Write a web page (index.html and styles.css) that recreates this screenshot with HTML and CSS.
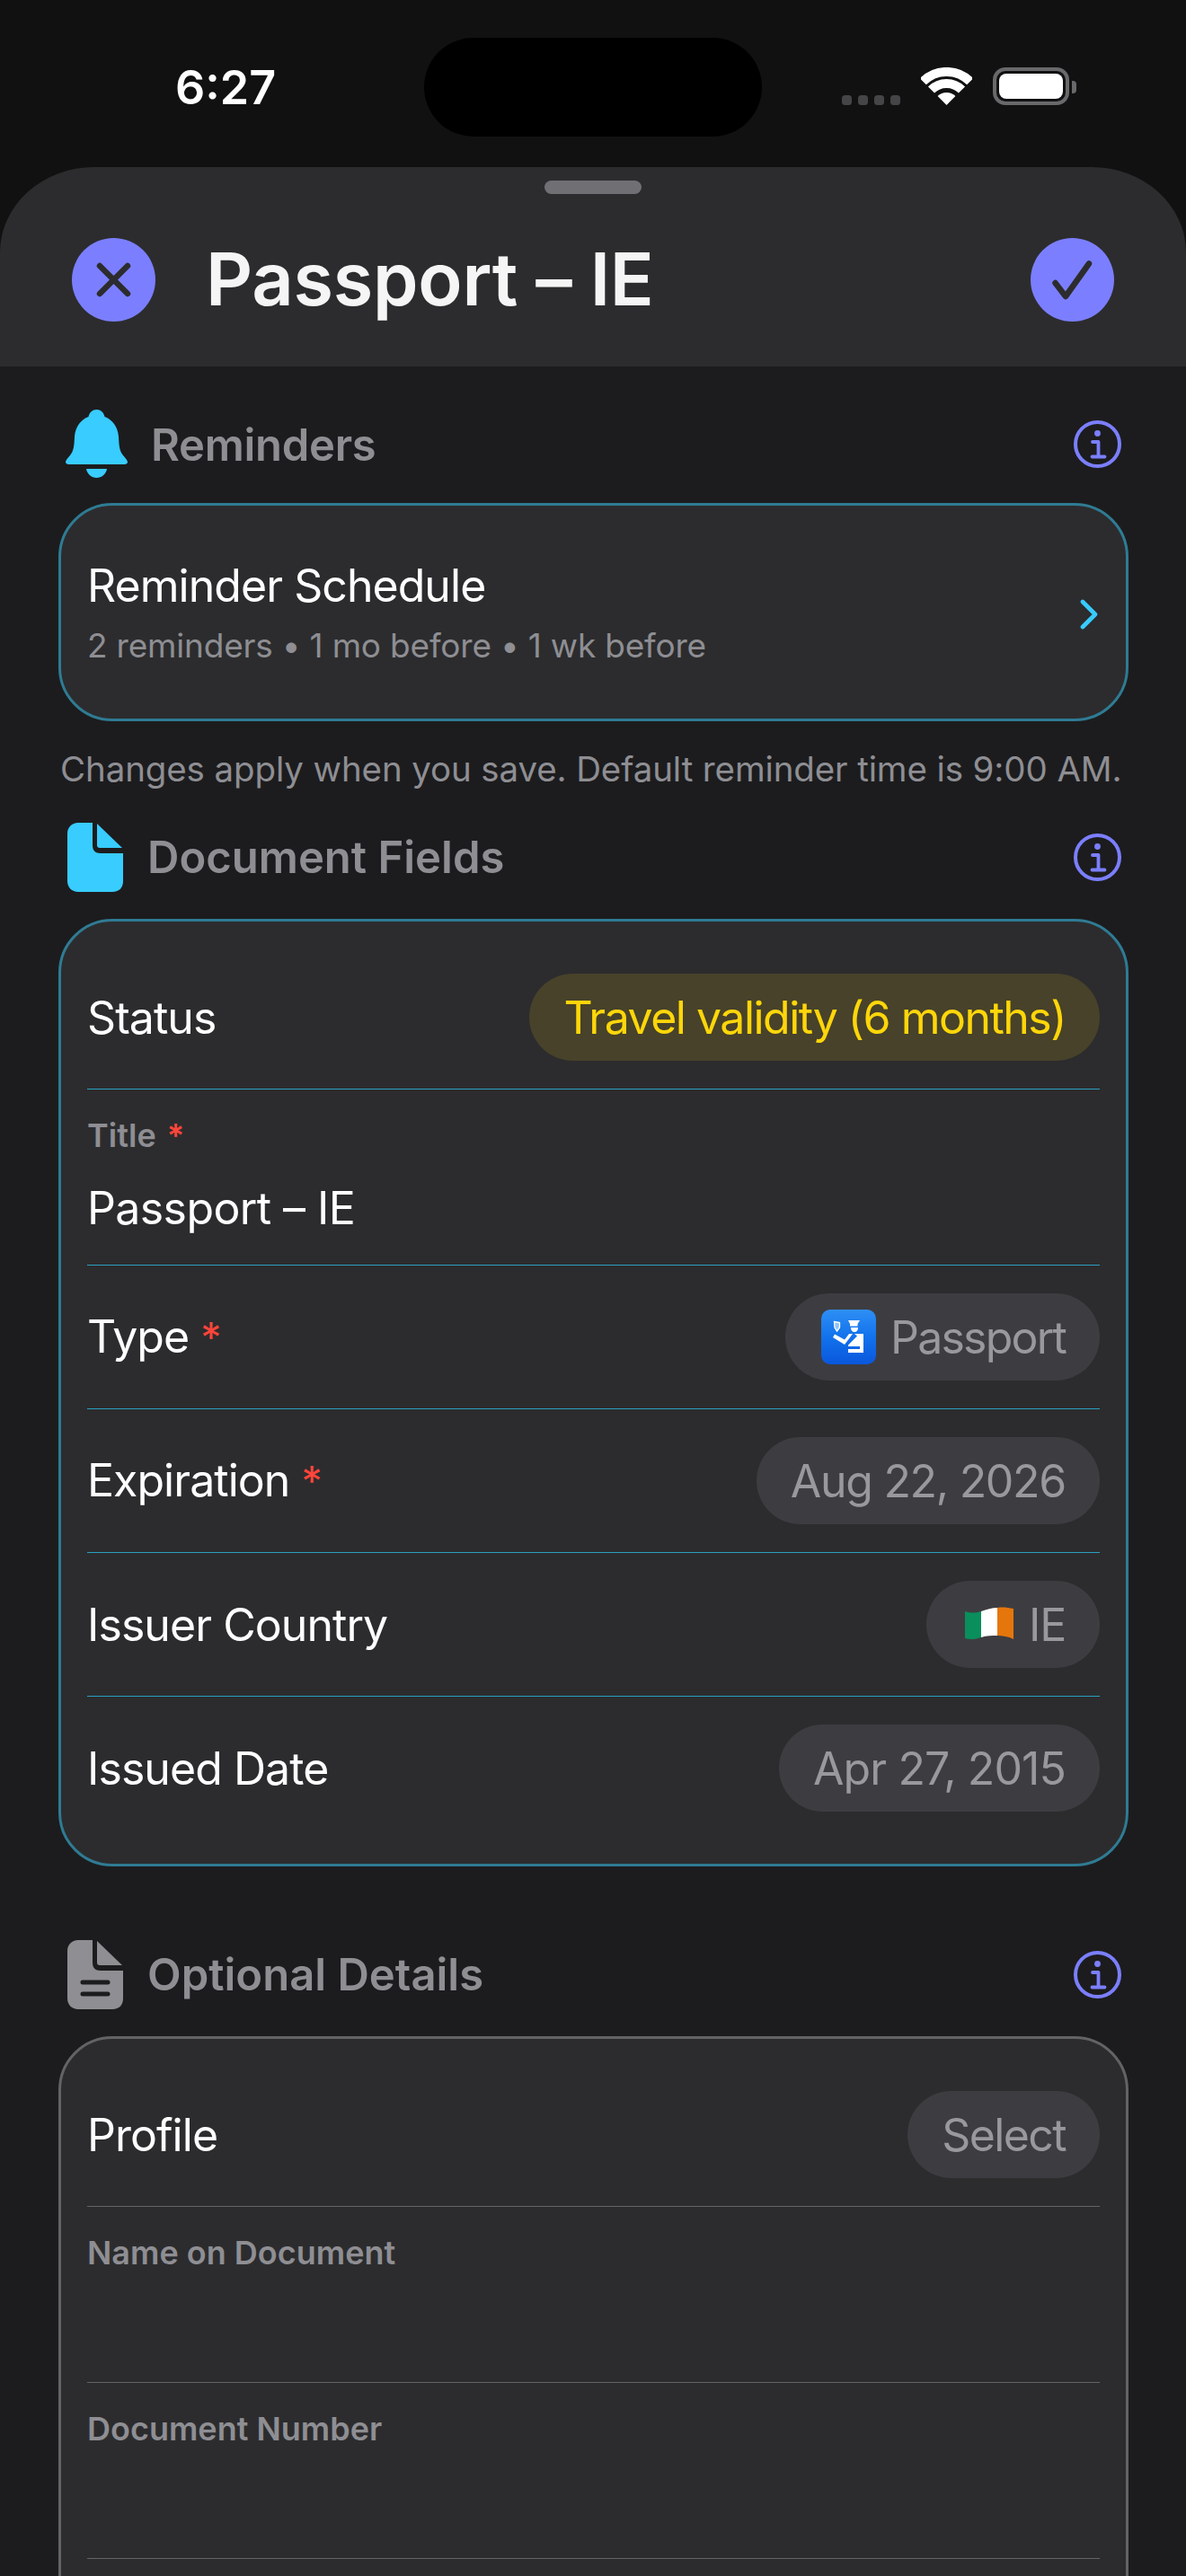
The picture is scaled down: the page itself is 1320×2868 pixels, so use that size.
FILE: index.html
```html
<!DOCTYPE html>
<html lang="en">
<head>
<meta charset="utf-8">
<title>Passport – IE</title>
<link rel="stylesheet" href="styles.css">
</head>
<body>
<div class="screen">
  <div class="top">
    <div class="statusbar">
      <div class="time">6:27</div>
      <div class="island"></div>
      <div class="status-icons">
        <div class="signal"><i></i><i></i><i></i><i></i></div>
        <svg class="wifi" viewBox="0 0 57 42"><path d="M2.3 15.8A37 37 0 0 1 54.7 15.8" fill="none" stroke="#fff" stroke-width="10"/><path d="M11.5 25A24 24 0 0 1 45.5 25" fill="none" stroke="#fff" stroke-width="10"/><path d="M28.5 42L18.6 32.1A14 14 0 0 1 38.4 32.1Z" fill="#fff"/></svg>
        <div class="battery"><div class="battery-fill"></div></div>
        <div class="battery-nub"></div>
      </div>
    </div>
    <header class="sheet-head">
      <div class="grabber"></div>
      <div class="head-row">
        <div class="round-btn"><svg viewBox="0 0 39 39" class="btn-icon"><path d="M4 4L35 35M35 4L4 35" fill="none" stroke="#2c2c2e" stroke-width="6.5" stroke-linecap="round"/></svg></div>
        <h1 class="sheet-title">Passport – IE</h1>
        <div class="round-btn"><svg viewBox="0 0 45 44" class="btn-icon check"><path d="M3.5 25L15 40L41 3.5" fill="none" stroke="#2c2c2e" stroke-width="6.5" stroke-linecap="round" stroke-linejoin="round"/></svg></div>
      </div>
    </header>
  </div>
  <main class="content">
    <div class="section-head head-first">
      <svg class="icon-bell" viewBox="0 0 69 76"><path fill="#38ccff" d="M34.5 0C39 0 42.5 3 43.5 8C52 11 58 19 59 30C59.5 41 60 46 64 51C67 54.5 69 57 69 58.5C69 60 67.5 61 65.5 61H3.5C1.5 61 0 60 0 58.5C0 57 2 54.5 5 51C9 46 9.5 41 10 30C11 19 17 11 25.5 8C26.5 3 30 0 34.5 0Z"/><path fill="#38ccff" d="M23 66H46C45 72 40 76 34.5 76C29 76 24 72 23 66Z"/></svg>
      <h2 class="section-title">Reminders</h2>
      <svg class="icon-info" viewBox="0 0 53 53"><circle cx="26.5" cy="26.5" r="24.5" fill="none" stroke="#7b7fff" stroke-width="4"/><circle cx="26.5" cy="14.5" r="3.4" fill="#7b7fff"/><path d="M21 24H27.5V40M20.5 40.5H34.5" fill="none" stroke="#7b7fff" stroke-width="3.8" stroke-linecap="round" stroke-linejoin="round"/></svg>
    </div>
    <section class="card card-teal schedule">
      <div class="schedule-text">
        <div class="row-label">Reminder Schedule</div>
        <div class="schedule-sub">2 reminders • 1 mo before • 1 wk before</div>
      </div>
      <svg class="chevron" viewBox="0 0 20 34"><path d="M3 3L17 17L3 31" fill="none" stroke="#38ccff" stroke-width="4.6" stroke-linecap="round" stroke-linejoin="round"/></svg>
    </section>
    <p class="caption">Changes apply when you save. Default reminder time is 9:00 AM.</p>

    <div class="section-head">
      <svg class="icon-doc" viewBox="0 0 62 77"><path fill="#38ccff" d="M12 0H28V25C28 31 31 34 37 34H62V65C62 72 58 77 50 77H12C5 77 0 72 0 65V12C0 5 5 0 12 0Z"/><path fill="#38ccff" d="M33 1L61 28H36C34 28 33 27 33 25Z"/></svg>
      <h2 class="section-title">Document Fields</h2>
      <svg class="icon-info" viewBox="0 0 53 53"><circle cx="26.5" cy="26.5" r="24.5" fill="none" stroke="#7b7fff" stroke-width="4"/><circle cx="26.5" cy="14.5" r="3.4" fill="#7b7fff"/><path d="M21 24H27.5V40M20.5 40.5H34.5" fill="none" stroke="#7b7fff" stroke-width="3.8" stroke-linecap="round" stroke-linejoin="round"/></svg>
    </div>
    <section class="card card-teal form">
      <div class="row"><span class="row-label">Status</span><span class="pill pill-warn">Travel validity (6 months)</span></div>
      <div class="field"><div class="field-label">Title <span class="req">*</span></div><div class="field-value">Passport – IE</div></div>
      <div class="row"><span class="row-label">Type <span class="req">*</span></span><span class="pill pill-type">
        <svg class="emoji-passport" viewBox="0 0 61 61"><defs><linearGradient id="blue" x1="0" y1="0" x2="0" y2="1"><stop offset="0" stop-color="#2f8ff5"/><stop offset="0.5" stop-color="#1272ec"/><stop offset="1" stop-color="#0a57dc"/></linearGradient></defs><rect width="61" height="61" rx="10" fill="url(#blue)"/><path fill="#8fc4fb" stroke="#fff" stroke-width="1.3" d="M14.5 13.5L20.5 14.5V20L17.5 24L15 20Z"/><path fill="#fff" d="M30 12H43L40.5 16V18.5H32V16Z"/><path fill="#fff" d="M33 20H41C41 23.5 39.5 25 37 25C34.5 25 33 23.5 33 20Z"/><path fill="#fff" d="M15 27.5L26 33.5L31 27H35L26 39L13 31Z"/><path fill="#fff" d="M37 27H47V48H30V44H43V41H30V39.500L40 29.500Z"/></svg>
        Passport</span></div>
      <div class="row"><span class="row-label">Expiration <span class="req">*</span></span><span class="pill">Aug 22, 2026</span></div>
      <div class="row"><span class="row-label">Issuer Country</span><span class="pill pill-flag">
        <svg class="emoji-flag" viewBox="0 0 54 39"><path fill="#0a8f5c" d="M0 5C6 7 12 7 18 5V34C12 36 6 37 0 35Z"/><path fill="#fff" d="M18 5C24 3 30 1 36 1V32C30 32 24 32 18 34Z"/><path fill="#e5760c" d="M36 1C42 0 48 1 54 2V36C48 33 42 32 36 32Z"/></svg>
        IE</span></div>
      <div class="row"><span class="row-label">Issued Date</span><span class="pill pill-date">Apr 27, 2015</span></div>
    </section>

    <div class="section-head head-spaced">
      <svg class="icon-doc" viewBox="0 0 62 77"><path fill="#8e8e93" d="M12 0H28V25C28 31 31 34 37 34H62V65C62 72 58 77 50 77H12C5 77 0 72 0 65V12C0 5 5 0 12 0Z"/><path fill="#8e8e93" d="M33 1L61 28H36C34 28 33 27 33 25Z"/><path d="M17 47H45M17 60H45" fill="none" stroke="#1c1c1e" stroke-width="5" stroke-linecap="round"/></svg>
      <h2 class="section-title">Optional Details</h2>
      <svg class="icon-info" viewBox="0 0 53 53"><circle cx="26.5" cy="26.5" r="24.5" fill="none" stroke="#7b7fff" stroke-width="4"/><circle cx="26.5" cy="14.5" r="3.4" fill="#7b7fff"/><path d="M21 24H27.5V40M20.5 40.5H34.5" fill="none" stroke="#7b7fff" stroke-width="3.8" stroke-linecap="round" stroke-linejoin="round"/></svg>
    </div>
    <section class="card card-gray form">
      <div class="row"><span class="row-label">Profile</span><span class="pill pill-select">Select</span></div>
      <div class="field"><div class="field-label">Name on Document</div><div class="field-value"></div></div>
      <div class="field"><div class="field-label">Document Number</div><div class="field-value"></div></div>
      <div class="field"></div>
    </section>
  </main>
</div>
</body>
</html>
```
FILE: styles.css
```css
* { box-sizing: border-box; }
html, body { margin: 0; padding: 0; background: #1c1c1e; }
body { font-family: Inter, "Liberation Sans", sans-serif; color: #fff; }
h1, h2, p { margin: 0; font: inherit; }

.screen { width: 1320px; height: 2868px; overflow: hidden; background: #1c1c1e; }
.top { background: #111112; }

.statusbar { height: 186px; display: grid; grid-template-columns: 472px 376px 1fr; }
.time { font-size: 52px; font-weight: 600; padding: 66px 0 0 195px; line-height: 63px; }
.island { width: 376px; height: 110px; margin-top: 42px; border-radius: 55px; background: #000; }
.status-icons { display: flex; align-items: flex-start; padding: 75px 0 0 89px; }
.signal { display: flex; gap: 7px; margin-top: 31px; width: 65px; }
.signal i { width: 11px; height: 11px; border-radius: 3.5px; background: #454547; }
.wifi { width: 57px; height: 42px; margin-left: 23px; }
.battery { width: 85px; height: 42px; margin-left: 23px; border: 4px solid #69696b; border-radius: 14px; padding: 3px; }
.battery-fill { width: 100%; height: 100%; background: #fff; border-radius: 8px; }
.battery-nub { width: 5px; height: 14px; margin: 15px 0 0 3px; background: #69696b; border-radius: 0 4px 4px 0; }

.sheet-head { height: 222px; background: #2c2c2e; border-radius: 105px 105px 0 0 / 95px 95px 0 0; padding-top: 15px; }
.grabber { width: 108px; height: 15px; border-radius: 7.5px; background: #6f6f74; margin: 0 auto; }
.head-row { display: flex; align-items: center; padding: 49px 80px 0; }
.round-btn { width: 93px; height: 93px; border-radius: 50%; background: #7b7fff; display: flex; align-items: center; justify-content: center; flex: none; }
.btn-icon { width: 39px; height: 39px; }
.btn-icon.check { width: 45px; height: 44px; }
.sheet-title { flex: 1; margin-left: 56px; font-size: 81px; font-weight: 600; letter-spacing: -0.25px; color: #f5f5f5; line-height: 93px; }

.content { padding: 0 64px 0 65px; }
.section-head { display: flex; align-items: center; gap: 27px; padding: 0 8px 0 10px; height: 77px; margin-bottom: 30px; }
.head-first { padding-left: 8px; margin-top: 48px; height: 76px; margin-bottom: 28px; gap: 26px; }
.head-first .section-title { padding-top: 2px; letter-spacing: -0.3px; }
.head-spaced { margin-top: 82px; }
.section-title { flex: 1; font-size: 49px; font-weight: 600; color: #8e8e93; }
.icon-bell { width: 69px; height: 76px; flex: none; }
.icon-doc { width: 62px; height: 77px; flex: none; }
.icon-info { width: 53px; height: 53px; flex: none; }

.card { border: 3px solid #2f7b93; border-radius: 60px; background: #2c2c2e; padding: 27px 29px; }
.card-teal { border-color: #2f7b93; }
.card-gray { border-color: #636366; }
.card-gray .row, .card-gray .field { border-bottom-color: #636366; }

.schedule { height: 243px; padding: 0 29px; display: flex; align-items: center; justify-content: space-between; }
.schedule-text { display: flex; flex-direction: column; gap: 14px; }
.chevron { width: 20px; height: 34px; margin: 4px 2px 0 0; }
.row-label { font-size: 50px; font-weight: 400; letter-spacing: -0.95px; color: #fff; line-height: 60px; }
.schedule-sub { font-size: 37px; letter-spacing: -0.2px; color: #8e8e93; line-height: 45px; }
.caption { font-size: 38.5px; letter-spacing: -0.12px; color: #8e8e93; line-height: 45px; margin: 31px 0 37px 2px; white-space: nowrap; }

.row { display: flex; align-items: center; justify-content: space-between; padding: 31px 0; height: 160px; border-bottom: 1px solid #2a9fc0; }
.row:last-child { border-bottom: 0; height: 159px; }
.field { height: 196px; padding-top: 28px; border-bottom: 1px solid #2a9fc0; }
.field-label { font-size: 36px; font-weight: 600; color: #8e8e93; line-height: 46px; }
.field-label .req { margin-left: 3px; }
.field-value { font-size: 50px; letter-spacing: -0.6px; color: #fff; line-height: 60px; margin-top: 28px; }
.req { color: #ff453a; }
.row-label .req { font-size: 46px; }

.pill { height: 97px; border-radius: 48.5px; padding: 0 38px; background: #3d3d41; color: #98989d; font-size: 50px; letter-spacing: -1.3px; display: flex; align-items: center; white-space: nowrap; }
.pill-warn { background: #474229; color: #ffd60a; letter-spacing: -1.5px; }
.pill-type { gap: 16px; padding-left: 40px; letter-spacing: -1.8px; }
.pill-flag { gap: 17px; padding-left: 43px; }
.pill-date { letter-spacing: -0.9px; }
.pill-select { letter-spacing: -1.6px; }
.emoji-passport { width: 61px; height: 61px; flex: none; }
.emoji-flag { width: 54px; height: 39px; flex: none; }
```
